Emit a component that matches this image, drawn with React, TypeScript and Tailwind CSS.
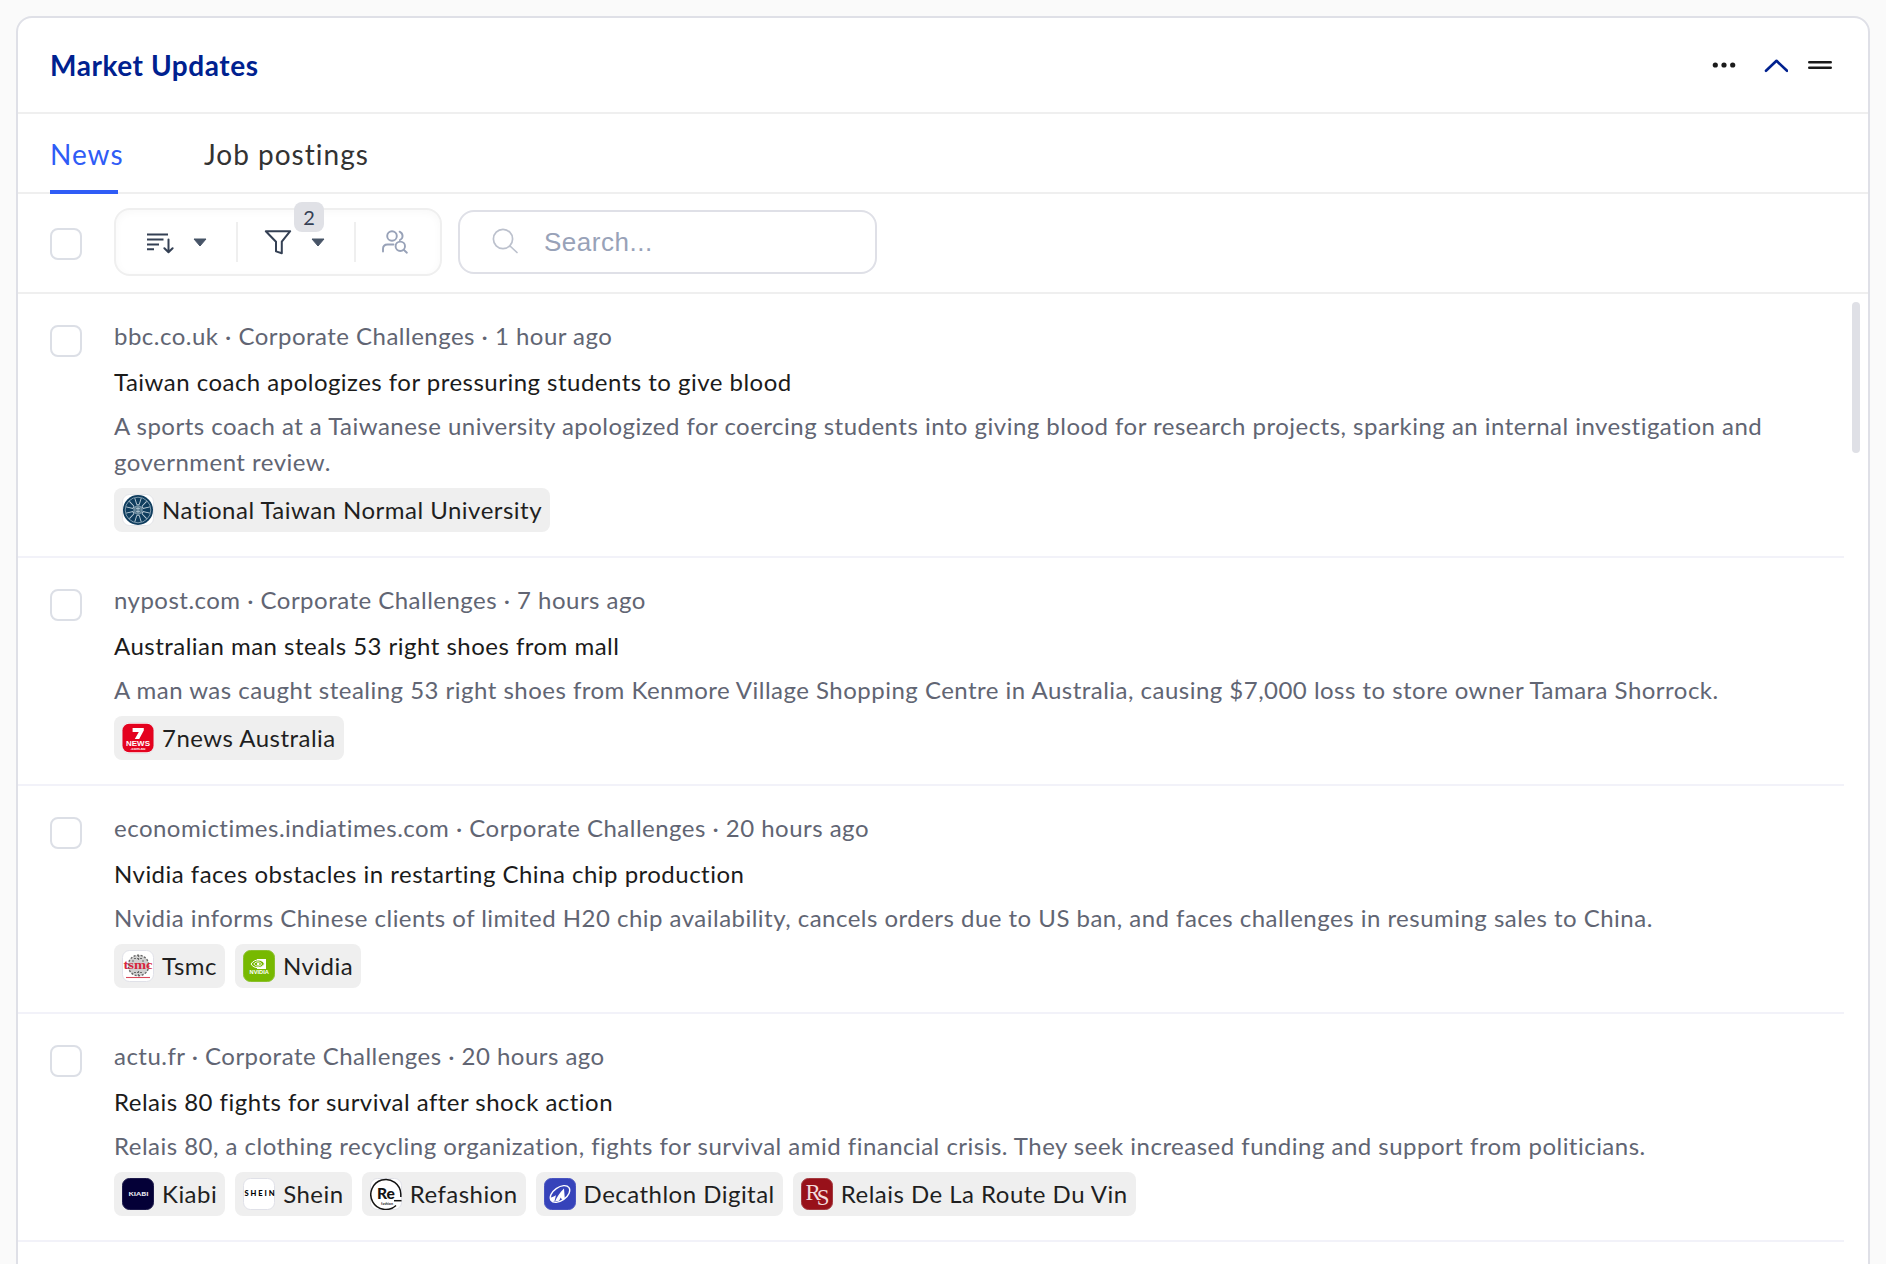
import React from 'react';

interface Company {
  name: string;
  logo: React.ReactNode;
}

interface NewsItem {
  source: string;
  age: string;
  title: string;
  summary: string;
  companies: Company[];
}

const NtnuLogo = () => (
  <svg viewBox="0 0 32 32" className="size-8">
    <rect x="0.5" y="0.5" width="31" height="31" rx="7" fill="#fff" stroke="#e3e4e8" />
    <circle cx="16" cy="16" r="15" fill="#0f3d5e" />
    <circle cx="16" cy="16" r="12.8" fill="none" stroke="#a9bfcd" strokeWidth="0.7" />
    {[0, 60, 120, 180, 240, 300].map((deg) => (
      <g key={deg} transform={`rotate(${deg} 16 16)`}>
        <path d="M12.800 4.200l2 6.500h2.400l2-6.500" fill="none" stroke="#c3d2dc" strokeWidth="0.9" />
      </g>
    ))}
    <circle cx="16" cy="16" r="4.200" fill="#56798f" stroke="#a9bfcd" strokeWidth="0.7" />
    <path d="M14 14.500h4M14 17.500h4M16 13v6" stroke="#c8d6e0" strokeWidth="0.6" />
  </svg>
);

const SevenNewsLogo = () => (
  <svg viewBox="0 0 32 32" className="size-8">
    <rect x="0.5" y="0.5" width="31" height="31" rx="7" fill="#fff" stroke="#e3e4e8" />
    <rect x="0.5" y="1.8" width="31" height="28.4" rx="6.5" fill="#e4021f" />
    <path d="M10.600 6h11.200v2.600l-4.600 8.400h-4.400l4-7h-6.200z" fill="#fff" />
    <text x="16" y="23.600" textAnchor="middle" textLength="24" lengthAdjust="spacingAndGlyphs" className="fill-white font-['Liberation_Sans'] text-[7px] font-bold">NEWS</text>
    <text x="16" y="27.600" textAnchor="middle" textLength="15" lengthAdjust="spacingAndGlyphs" className="fill-white font-['Liberation_Sans'] text-[4px] font-bold">.com.au</text>
  </svg>
);

const TsmcLogo = () => (
  <svg viewBox="0 0 32 32" className="size-8">
    <rect x="0.5" y="0.5" width="31" height="31" rx="7" fill="#fff" stroke="#e0e1e8" />
    <circle cx="16.5" cy="15.5" r="10.5" fill="#d0d0d0" />
    <circle cx="16.5" cy="15.5" r="10.3" fill="none" stroke="#666" strokeWidth="1.400" strokeDasharray="2 1.600" />
    <path d="M16.500 5v5M12 8.500h9M12 22.500h9M16.500 21v5M10 11h3M20 11h3" stroke="#6b6b6b" strokeWidth="1.200" strokeDasharray="2 1" />
    <text x="1.500" y="19" textLength="29" lengthAdjust="spacingAndGlyphs" className="fill-[#d7263d] font-['Liberation_Serif'] text-[12px] font-bold">tsmc</text>
    <path d="M4 27.500h24" stroke="#d9485a" strokeWidth="1.100" />
  </svg>
);

const NvidiaLogo = () => (
  <svg viewBox="0 0 32 32" className="size-8">
    <rect x="0.5" y="0.5" width="31" height="31" rx="7" fill="#77b900" stroke="#8ac02c" />
    <path d="M14 9h9v10h-9z" fill="#fff" />
    <path d="M8 14c2-3 5-4.200 8-4 2.600.2 4.500 2 5.500 4-1.800 2.200-3.500 3.600-6.500 3.700-3 0-5.500-1.200-7-3.700z" fill="#77b900" stroke="#fff" strokeWidth="1" />
    <path d="M10.800 14c1.200-1.600 2.800-2.300 4.700-2.100 1.500.2 2.500 1.100 3.200 2.100-1 1.300-2.200 2.100-3.700 2.100s-3.200-.7-4.200-2.100z" fill="none" stroke="#fff" strokeWidth="0.9" />
    <circle cx="15.200" cy="14" r="1.300" fill="#fff" />
    <text x="6.500" y="24.400" textLength="19.500" lengthAdjust="spacingAndGlyphs" className="fill-white font-['Liberation_Sans'] text-[5.200px] font-bold">NVIDIA</text>
  </svg>
);

const KiabiLogo = () => (
  <svg viewBox="0 0 32 32" className="size-8">
    <rect x="0.5" y="0.5" width="31" height="31" rx="7" fill="#040037" stroke="#1d1a4b" />
    <text x="6.500" y="18.200" textLength="20" lengthAdjust="spacingAndGlyphs" className="fill-[#e6e5ee] font-['Lato'] text-[5.600px] font-black">KIABI</text>
  </svg>
);

const SheinLogo = () => (
  <svg viewBox="0 0 32 32" className="size-8">
    <rect x="0.5" y="0.5" width="31" height="31" rx="7" fill="#fff" stroke="#e0e1e8" />
    <text x="1.500" y="18.300" textLength="30" className="fill-black font-['Lato'] text-[7.600px] font-black">SHEIN</text>
  </svg>
);

const RefashionLogo = () => (
  <svg viewBox="0 0 32 32" className="size-8">
    <rect x="0.5" y="0.5" width="31" height="31" rx="7" fill="#fff" stroke="#e0e1e8" />
    <path d="M30.800 19v-3A15 15 0 1 0 26 27.500" fill="none" stroke="#141414" strokeWidth="1.500" />
    <text x="7" y="21.200" textLength="18" lengthAdjust="spacingAndGlyphs" className="fill-[#141414] font-['Lato'] text-[15px] font-black">Re</text>
    <path d="M24 22.700h7.500" stroke="#141414" strokeWidth="1.500" />
    <text x="11" y="26.500" textLength="12" lengthAdjust="spacingAndGlyphs" className="fill-[#141414] font-['Lato'] text-[4px] font-bold">fashion</text>
  </svg>
);

const DecathlonLogo = () => (
  <svg viewBox="0 0 32 32" className="size-8">
    <rect x="0.5" y="0.5" width="31" height="31" rx="7" fill="#3643ba" stroke="#4a55c0" />
    <ellipse cx="16" cy="16" rx="11" ry="6.600" transform="rotate(-35 16 16)" fill="none" stroke="#fff" strokeWidth="1.300" />
    <path d="M7 19.500c2-.5 3.600-1.300 5-2.300l-1.600 6.300c-3.200.4-4.600-1.200-3.400-4z" fill="#fff" />
    <path d="M20 10.500l.8 10.300-2.600 1.200-1.500-2.500-1.500 3.200-4.200.8c1.500-4 4.500-8.500 9-13z" fill="#fff" />
  </svg>
);

const RelaisLogo = () => (
  <svg viewBox="0 0 32 32" className="size-8">
    <rect x="0.5" y="0.5" width="31" height="31" rx="7" fill="#98111a" stroke="#a33a40" />
    <text x="4.600" y="21.500" className="fill-[#f3dcdc] font-['Liberation_Serif'] text-[23px]">
      R<tspan dx="-4.200" dy="5.500">S</tspan>
    </text>
  </svg>
);

const news: NewsItem[] = [
  {
    source: 'bbc.co.uk',
    age: '1 hour ago',
    title: 'Taiwan coach apologizes for pressuring students to give blood',
    summary:
      'A sports coach at a Taiwanese university apologized for coercing students into giving blood for research projects, sparking an internal investigation and government review.',
    companies: [{ name: 'National Taiwan Normal University', logo: <NtnuLogo /> }],
  },
  {
    source: 'nypost.com',
    age: '7 hours ago',
    title: 'Australian man steals 53 right shoes from mall',
    summary:
      'A man was caught stealing 53 right shoes from Kenmore Village Shopping Centre in Australia, causing $7,000 loss to store owner Tamara Shorrock.',
    companies: [{ name: '7news Australia', logo: <SevenNewsLogo /> }],
  },
  {
    source: 'economictimes.indiatimes.com',
    age: '20 hours ago',
    title: 'Nvidia faces obstacles in restarting China chip production',
    summary:
      'Nvidia informs Chinese clients of limited H20 chip availability, cancels orders due to US ban, and faces challenges in resuming sales to China.',
    companies: [
      { name: 'Tsmc', logo: <TsmcLogo /> },
      { name: 'Nvidia', logo: <NvidiaLogo /> },
    ],
  },
  {
    source: 'actu.fr',
    age: '20 hours ago',
    title: 'Relais 80 fights for survival after shock action',
    summary:
      'Relais 80, a clothing recycling organization, fights for survival amid financial crisis. They seek increased funding and support from politicians.',
    companies: [
      { name: 'Kiabi', logo: <KiabiLogo /> },
      { name: 'Shein', logo: <SheinLogo /> },
      { name: 'Refashion', logo: <RefashionLogo /> },
      { name: 'Decathlon Digital', logo: <DecathlonLogo /> },
      { name: 'Relais De La Route Du Vin', logo: <RelaisLogo /> },
    ],
  },
];

const Checkbox = ({ className = '' }: { className?: string }) => (
  <button
    role="checkbox"
    aria-checked="false"
    className={`size-8 shrink-0 rounded-lg border-2 border-[#dcdfe6] bg-white ${className}`}
  />
);

const Caret = () => (
  <svg width="14" height="10" viewBox="0 0 14 10" className="mt-px">
    <path d="M1 1h12L7 8z" fill="#475467" stroke="#475467" strokeLinejoin="round" />
  </svg>
);

function Header() {
  return (
    <header className="flex h-24 items-center justify-between border-b-2 border-[#efefef] pr-[34px] pl-8">
      <h2 className="text-[28px] font-bold tracking-[0.02em] text-[#00218f]">Market Updates</h2>
      <div className="flex items-center">
        <svg width="24" height="24" viewBox="0 0 24 24" fill="#1b1b1b">
          <circle cx="3.300" cy="12" r="2.600" />
          <circle cx="12" cy="12" r="2.600" />
          <circle cx="20.700" cy="12" r="2.600" />
        </svg>
        <svg width="24" height="24" viewBox="0 0 24 24" className="ml-7" fill="none" stroke="#00218f" strokeWidth="2.600">
          <path d="M2 17.800 12.500 7.800 23 17.800" strokeLinecap="round" strokeLinejoin="round" />
        </svg>
        <svg width="28" height="24" viewBox="0 0 28 24" className="ml-[18px]" stroke="#1b1b1b" strokeWidth="2.600" strokeLinecap="round">
          <path d="M3.300 9.300h21.400M3.300 14.700h21.400" />
        </svg>
      </div>
    </header>
  );
}

function Tabs() {
  return (
    <nav className="flex h-20 gap-[82px] border-b-2 border-[#efefef] pl-8 text-[28px] tracking-[1px]">
      <button className="-mb-0.5 flex w-[72px] flex-col justify-end text-[#2f5cf6]">
        <span className="mb-[15px] leading-[42px]">News</span>
        <span className="h-1 w-[68px] bg-[#2f5cf6]" />
      </button>
      <button className="pt-0.5 whitespace-nowrap text-[#333]">Job postings</button>
    </nav>
  );
}

function Toolbar() {
  return (
    <div className="flex h-[100px] items-center border-b-2 border-[#efefef] pb-0.5 pl-8">
      <Checkbox className="mt-1" />
      <div className="ml-8 flex h-[68px] w-[328px] items-center rounded-2xl border-2 border-[#efefef] shadow-[inset_0_2px_8px_rgba(0,0,0,0.03)]">
        <div className="flex w-[120px] items-center pl-[30px]">
          <svg width="28" height="24" viewBox="0 0 28 24" fill="none" stroke="#344054" strokeWidth="2">
            <path d="M1 4.600h21M1 9.500h16.500M1 14.400h12M1 19.200h7" />
            <path d="M22.500 9.500v12.300M18.400 18.200l4.100 4 4.100-4" strokeLinecap="round" strokeLinejoin="round" />
          </svg>
          <span className="ml-[19px]">
            <Caret />
          </span>
        </div>
        <div className="relative flex h-10 w-[120px] items-center border-x-2 border-[#efefef] pl-[26px]">
          <svg width="28" height="26" viewBox="0 0 28 26" fill="none" stroke="#344054" strokeWidth="2" strokeLinejoin="round">
            <path d="M1.800 2.200h24.400L17.800 12.700v11.500l-5.800-1.800v-9.700z" />
          </svg>
          <span className="ml-[19px]">
            <Caret />
          </span>
          <span className="absolute top-[-20px] left-[56px] flex size-[30px] items-center justify-center rounded-lg bg-[#e0e1e6] text-[20px] leading-none text-[#344054]">
            2
          </span>
        </div>
        <div className="pl-[25px]">
          <svg width="28" height="26" viewBox="0 0 28 26" fill="none" stroke="#98a2b8" strokeWidth="1.900" strokeLinecap="round">
            <circle cx="11" cy="7" r="4.800" />
            <path d="M18.600 2.700c3.800 1.800 4 6.600.3 8.300M2 22.500v-2.400c0-3 1.800-4.600 4.500-4.600h6" />
            <circle cx="19.300" cy="17.300" r="4.700" />
            <path d="m22.700 20.700 3.200 3" />
          </svg>
        </div>
      </div>
      <label className="ml-4 flex h-16 w-[419px] items-center rounded-2xl border-2 border-[#dfe0e7] pl-8">
        <svg width="28" height="28" viewBox="0 0 28 28" fill="none" stroke="#bcc1cd" strokeWidth="1.700">
          <circle cx="11" cy="11" r="9.600" />
          <path d="m18 18 7 6.500" strokeLinecap="round" />
        </svg>
        <input
          placeholder="Search..."
          className="ml-6 w-60 font-['Liberation_Sans',Arial,sans-serif] text-[26px] tracking-[0.02em] outline-none placeholder:text-[#98a2b8]"
        />
      </label>
    </div>
  );
}

function NewsRow({ item }: { item: NewsItem }) {
  return (
    <li className="flex border-b-2 border-[#f2f2f9] pt-6 pb-6 pl-8">
      <Checkbox className="mt-[7px]" />
      <div className="ml-8 flex-1 pr-14 text-[24px] leading-9 tracking-[0.02em]">
        <p className="text-[#616573]">
          {item.source} · Corporate Challenges · {item.age}
        </p>
        <h3 className="mt-2.5 text-[#1b1b1b]">{item.title}</h3>
        <p className="mt-2 text-[#616573]">{item.summary}</p>
        <div className="mt-2 flex gap-2.5">
          {item.companies.map((company) => (
            <span
              key={company.name}
              className="flex h-11 items-center gap-2 rounded-lg bg-[#efefef] px-2 whitespace-nowrap text-[#1f1f1f]"
            >
              <span className="tracking-normal">{company.logo}</span>
              {company.name}
            </span>
          ))}
        </div>
      </div>
    </li>
  );
}

export default function App() {
  return (
    <div className="h-[1264px] overflow-hidden bg-[#fafafa] px-4 pt-4 font-['Lato',sans-serif]">
      <section className="h-[1300px] rounded-2xl border-2 border-[#dfe0e7] bg-white">
        <Header />
        <Tabs />
        <Toolbar />
        <div className="flex">
          <ul className="w-[1826px]">
            {news.map((item) => (
              <NewsRow key={item.title} item={item} />
            ))}
          </ul>
          <div className="mt-2 ml-2 h-[151px] w-2 rounded-full bg-[#dfe0e6]" />
        </div>
      </section>
    </div>
  );
}
